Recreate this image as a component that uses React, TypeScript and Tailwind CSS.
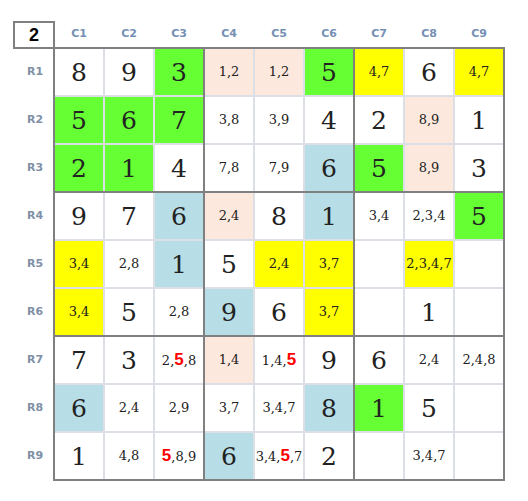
type Cell = { v?: number; c?: string; bg?: string };

const G = "bg-[#66ff33]";
const Y = "bg-[#ffff00]";
const P = "bg-[#fce8dc]";
const B = "bg-[#b7dde6]";

// candidates use "*" to mark the highlighted (red) digit
const rows: Cell[][] = [
  [{ v: 8 }, { v: 9 }, { v: 3, bg: G }, { c: "1,2", bg: P }, { c: "1,2", bg: P }, { v: 5, bg: G }, { c: "4,7", bg: Y }, { v: 6 }, { c: "4,7", bg: Y }],
  [{ v: 5, bg: G }, { v: 6, bg: G }, { v: 7, bg: G }, { c: "3,8" }, { c: "3,9" }, { v: 4 }, { v: 2 }, { c: "8,9", bg: P }, { v: 1 }],
  [{ v: 2, bg: G }, { v: 1, bg: G }, { v: 4 }, { c: "7,8" }, { c: "7,9" }, { v: 6, bg: B }, { v: 5, bg: G }, { c: "8,9", bg: P }, { v: 3 }],
  [{ v: 9 }, { v: 7 }, { v: 6, bg: B }, { c: "2,4", bg: P }, { v: 8 }, { v: 1, bg: B }, { c: "3,4" }, { c: "2,3,4" }, { v: 5, bg: G }],
  [{ c: "3,4", bg: Y }, { c: "2,8" }, { v: 1, bg: B }, { v: 5 }, { c: "2,4", bg: Y }, { c: "3,7", bg: Y }, {}, { c: "2,3,4,7", bg: Y }, {}],
  [{ c: "3,4", bg: Y }, { v: 5 }, { c: "2,8" }, { v: 9, bg: B }, { v: 6 }, { c: "3,7", bg: Y }, {}, { v: 1 }, {}],
  [{ v: 7 }, { v: 3 }, { c: "2,*5,8" }, { c: "1,4", bg: P }, { c: "1,4,*5" }, { v: 9 }, { v: 6 }, { c: "2,4" }, { c: "2,4,8" }],
  [{ v: 6, bg: B }, { c: "2,4" }, { c: "2,9" }, { c: "3,7" }, { c: "3,4,7" }, { v: 8, bg: B }, { v: 1, bg: G }, { v: 5 }, {}],
  [{ v: 1 }, { c: "4,8" }, { c: "*5,8,9" }, { v: 6, bg: B }, { c: "3,4,*5,7" }, { v: 2 }, {}, { c: "3,4,7" }, {}],
];

function Candidates({ text }: { text: string }) {
  return (
    <span className="text-[13px] font-['DejaVu_Serif',serif] text-[#222]">
      {text.split(",").map((d, i) => (
        <span key={i}>
          {i > 0 && ","}
          {d.startsWith("*") ? (
            <span className="text-[17px] font-bold font-['Liberation_Sans',sans-serif] text-[#ff0000]">
              {d.slice(1)}
            </span>
          ) : (
            d
          )}
        </span>
      ))}
    </span>
  );
}

function SudokuCell({ cell }: { cell: Cell }) {
  return (
    <div
      className={`w-[48px] h-[46px] flex items-center justify-center ${
        cell.bg ?? "bg-white"
      }`}
    >
      {cell.v !== undefined && (
        <span className="text-[25px] leading-none font-['DejaVu_Serif',serif] text-[#222]">
          {cell.v}
        </span>
      )}
      {cell.c && <Candidates text={cell.c} />}
    </div>
  );
}

function Box({ br, bc }: { br: number; bc: number }) {
  const cells: Cell[] = [];
  for (let r = 0; r < 3; r++)
    for (let c = 0; c < 3; c++) cells.push(rows[br * 3 + r][bc * 3 + c]);
  return (
    <div className="grid grid-cols-3 gap-[2px] bg-[#dcdfe6]">
      {cells.map((cell, i) => (
        <SudokuCell key={i} cell={cell} />
      ))}
    </div>
  );
}

export default function App() {
  return (
    <div className="w-[528px] h-[501px] bg-white pt-[21px] pl-[13px]">
      <div className="flex h-[26px]">
        <div className="w-[42px] h-[28px] border-2 border-[#808080] flex items-center justify-center text-[18px] font-bold font-['Liberation_Sans',sans-serif] text-black">
          2
        </div>
        <div className="flex gap-[2px]">
          {Array.from({ length: 9 }, (_, i) => (
            <div
              key={i}
              className="w-[48px] flex items-center justify-center text-[11px] font-bold font-['DejaVu_Sans',sans-serif] text-[#7590b4]"
            >
              C{i + 1}
            </div>
          ))}
        </div>
      </div>
      <div className="flex">
        <div className="w-[40px] flex flex-col gap-[2px] pt-[2px] pl-[4px]">
          {Array.from({ length: 9 }, (_, i) => (
            <div
              key={i}
              className={`h-[46px] flex items-center justify-center text-[11px] font-bold font-['DejaVu_Sans',sans-serif] text-[#8090a6] ${
                i === 3 || i === 6 ? "mt-[0px]" : ""
              }`}
            >
              R{i + 1}
            </div>
          ))}
        </div>
        <div className="grid grid-cols-3 gap-[2px] p-[2px] bg-[#808080]">
          {[0, 1, 2].map((br) =>
            [0, 1, 2].map((bc) => <Box key={`${br}-${bc}`} br={br} bc={bc} />)
          )}
        </div>
      </div>
    </div>
  );
}
